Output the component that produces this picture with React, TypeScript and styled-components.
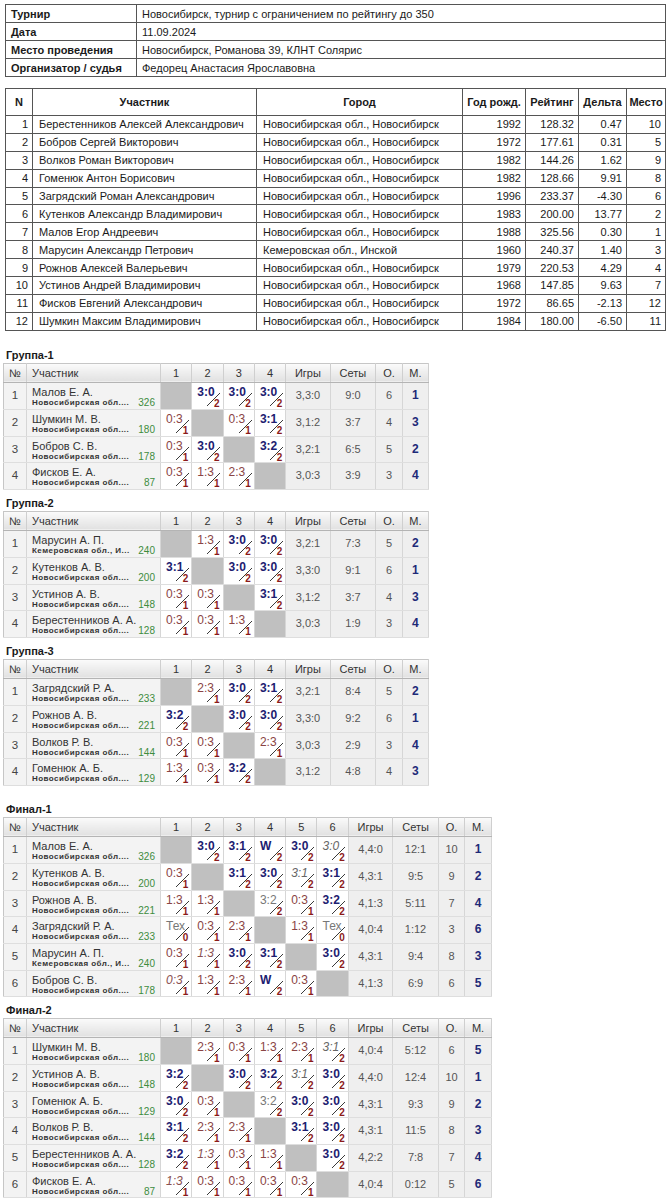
import React from 'react';
import styled, { createGlobalStyle } from 'styled-components';

const SANS = `"Liberation Sans", Arial, sans-serif`;

const GlobalStyle = createGlobalStyle`
  body {
    margin: 0;
    background: #fff;
    font-family: ${SANS};
  }
`;

const Page = styled.div`
  width: 672px;
  box-sizing: border-box;
  padding: 4px 0 0 3px;
`;

/* ---------- top tables ---------- */

const InfoTable = styled.table`
  width: 660px;
  margin: 0 0 11px 2px;
  border-collapse: collapse;
  table-layout: fixed;
  font-size: 11px;
  color: #1a1a1a;
`;

const InfoRow = styled.tr`
  height: 18px;
`;

const InfoCell = styled.td<{ $label?: boolean }>`
  border: 1px solid #555;
  padding: 0 5px;
  font-weight: ${p => (p.$label ? 'bold' : 'normal')};
  white-space: nowrap;
`;

const Col = styled.col<{ $w: number }>`
  width: ${p => p.$w}px;
`;

const MainTable = styled.table`
  width: 660px;
  margin-left: 2px;
  border-collapse: collapse;
  table-layout: fixed;
  font-size: 11px;
  color: #1a1a1a;
`;

const MainHeadRow = styled.tr`
  height: 27px;
`;

const MainHead = styled.th`
  border: 1px solid #555;
  padding: 0;
  font-weight: bold;
  text-align: center;
  white-space: nowrap;
`;

const MainRow = styled.tr`
  height: 17.9px;
`;

const MainCell = styled.td<{ $align?: 'left' | 'right' }>`
  border: 1px solid #555;
  padding: ${p => (p.$align === 'right' ? '0 4px 0 0' : '0 0 0 6px')};
  text-align: ${p => p.$align ?? 'left'};
  white-space: nowrap;
  overflow: hidden;
`;

/* ---------- round robin tables ---------- */

const Heading = styled.div<{ $top: number }>`
  margin: ${p => p.$top}px 0 1px 3px;
  font-size: 11px;
  line-height: 14px;
  font-weight: bold;
  color: #1a1a1a;
`;

const Grid = styled.table`
  border-collapse: collapse;
  table-layout: fixed;
  border: 1px solid #c6c6c6;
`;

const GridHead = styled.th<{ $left?: boolean }>`
  height: 18px;
  padding: ${p => (p.$left ? '0 0 0 5px' : '0')};
  text-align: ${p => (p.$left ? 'left' : 'center')};
  font-weight: normal;
  font-size: 11px;
  color: #333;
  background: linear-gradient(#fbfbfb, #e1e1e1);
  border-right: 1px solid #cfcfcf;
  border-bottom: 1px solid #b4b4b4;
`;

/* rows alternate 27/27/26 px so that they average the 26.7 px of the original */
const GridRow = styled.tr`
  height: 27px;
  &:nth-child(3n) {
    height: 26px;
  }
`;

const NumCell = styled.td`
  padding: 0;
  background: #f3f3f3;
  text-align: center;
  font-size: 11.5px;
  line-height: 13px;
  color: #444;
  border-right: 1px solid #d6d6d6;
  border-bottom: 1px solid #dedede;
`;

const PlayerCell = styled.td`
  padding: 0;
  vertical-align: top;
  background: #f3f3f3;
  border-right: 1px solid #d6d6d6;
  border-bottom: 1px solid #dedede;
`;

const PlayerBox = styled.div`
  height: 24px;
  box-sizing: border-box;
  padding: 3px 5px 0;
  overflow: hidden;
`;

const PlayerName = styled.div`
  font-size: 11px;
  line-height: 13px;
  color: #333;
  white-space: nowrap;
`;

const PlayerMeta = styled.div`
  display: flex;
  justify-content: space-between;
  align-items: flex-end;
  height: 8px;
`;

const Region = styled.span`
  font-size: 8px;
  line-height: 8px;
  font-weight: bold;
  letter-spacing: 0.45px;
  color: #333;
  white-space: nowrap;
`;

const Rating = styled.span`
  font-size: 10px;
  line-height: 8px;
  color: #3d8c3d;
`;

const ScoreCell = styled.td<{ $diag?: boolean }>`
  padding: 0;
  vertical-align: top;
  background: ${p => (p.$diag ? '#c0c0c0' : '#fff')};
  border-right: 1px solid #d6d6d6;
  border-bottom: 1px solid #dedede;
`;

const ScoreBox = styled.div`
  position: relative;
  height: 24px;
  box-sizing: border-box;
  padding: 2px 3px 0 5px;
  display: flex;
  flex-direction: column;
  justify-content: space-between;
`;

type Kind = 'w' | 'l' | 'n' | 'iw' | 'il';

const scoreColor: Record<Kind, string> = {
  w: '#1c2070',
  l: '#8a4444',
  n: '#777',
  iw: '#666',
  il: '#8a5050',
};

const ScoreText = styled.span<{ $kind: Kind }>`
  align-self: flex-start;
  font-size: 12px;
  line-height: 14px;
  font-weight: ${p => (p.$kind === 'w' ? 'bold' : 'normal')};
  font-style: ${p => (p.$kind === 'iw' || p.$kind === 'il' ? 'italic' : 'normal')};
  color: ${p => scoreColor[p.$kind]};
  white-space: nowrap;
`;

const Pts = styled.span`
  align-self: flex-end;
  font-size: 10px;
  line-height: 9px;
  font-weight: bold;
  color: #8b1a1a;
`;

const Slash = styled.svg`
  position: absolute;
  left: 0;
  top: 0;
  width: 31px;
  height: 26px;
  pointer-events: none;
`;

const StatCell = styled.td`
  padding: 0;
  background: #efefef;
  text-align: center;
  font-size: 11px;
  line-height: 13px;
  color: #555;
  border-right: 1px solid #d6d6d6;
  border-bottom: 1px solid #dedede;
`;

const PlaceCell = styled(StatCell)`
  font-size: 12px;
  font-weight: bold;
  color: #1e2a78;
`;

/* ---------- data ---------- */

type Res = [Kind, string, string] | null;

type Player = {
  name: string;
  region: string;
  rating: string;
  res: Res[];
  games: string;
  sets: string;
  pts: string;
  place: string;
};

const NSK = 'Новосибирская обл....';
const KEM = 'Кемеровская обл., И...';
const X: Res = null;
const w = (s: string): Res => ['w', s, '2'];
const l = (s: string): Res => ['l', s, '1'];
const iw = (s: string): Res => ['iw', s, '2'];
const il = (s: string): Res => ['il', s, '1'];
const n = (s: string, p: string): Res => ['n', s, p];

const pl = (
  name: string,
  region: string,
  rating: string,
  res: Res[],
  games: string,
  sets: string,
  pts: string,
  place: string,
): Player => ({ name, region, rating, res, games, sets, pts, place });

const info = [
  ['Турнир', 'Новосибирск, турнир с ограничением по рейтингу до 350'],
  ['Дата', '11.09.2024'],
  ['Место проведения', 'Новосибирск, Романова 39, КЛНТ Солярис'],
  ['Организатор / судья', 'Федорец Анастасия Ярославовна'],
];

const NSK_CITY = 'Новосибирская обл., Новосибирск';

const participants = [
  ['1', 'Берестенников Алексей Александрович', NSK_CITY, '1992', '128.32', '0.47', '10'],
  ['2', 'Бобров Сергей Викторович', NSK_CITY, '1972', '177.61', '0.31', '5'],
  ['3', 'Волков Роман Викторович', NSK_CITY, '1982', '144.26', '1.62', '9'],
  ['4', 'Гоменюк Антон Борисович', NSK_CITY, '1982', '128.66', '9.91', '8'],
  ['5', 'Загрядский Роман Александрович', NSK_CITY, '1996', '233.37', '-4.30', '6'],
  ['6', 'Кутенков Александр Владимирович', NSK_CITY, '1983', '200.00', '13.77', '2'],
  ['7', 'Малов Егор Андреевич', NSK_CITY, '1988', '325.56', '0.30', '1'],
  ['8', 'Марусин Александр Петрович', 'Кемеровская обл., Инской', '1960', '240.37', '1.40', '3'],
  ['9', 'Рожнов Алексей Валерьевич', NSK_CITY, '1979', '220.53', '4.29', '4'],
  ['10', 'Устинов Андрей Владимирович', NSK_CITY, '1968', '147.85', '9.63', '7'],
  ['11', 'Фисков Евгений Александрович', NSK_CITY, '1972', '86.65', '-2.13', '12'],
  ['12', 'Шумкин Максим Владимирович', NSK_CITY, '1984', '180.00', '-6.50', '11'],
];

const mainCols = [27, 224, 206, 63, 53, 48, 39];
const mainHeads = ['N', 'Участник', 'Город', 'Год рожд.', 'Рейтинг', 'Дельта', 'Место'];

type Group = { title: string; top: number; players: Player[] };

const groups: Group[] = [
  {
    title: 'Группа-1',
    top: 17,
    players: [
      pl('Малов Е. А.', NSK, '326', [X, w('3:0'), w('3:0'), w('3:0')], '3,3:0', '9:0', '6', '1'),
      pl('Шумкин М. В.', NSK, '180', [l('0:3'), X, l('0:3'), w('3:1')], '3,1:2', '3:7', '4', '3'),
      pl('Бобров С. В.', NSK, '178', [l('0:3'), w('3:0'), X, w('3:2')], '3,2:1', '6:5', '5', '2'),
      pl('Фисков Е. А.', NSK, '87', [l('0:3'), l('1:3'), l('2:3'), X], '3,0:3', '3:9', '3', '4'),
    ],
  },
  {
    title: 'Группа-2',
    top: 6,
    players: [
      pl('Марусин А. П.', KEM, '240', [X, l('1:3'), w('3:0'), w('3:0')], '3,2:1', '7:3', '5', '2'),
      pl('Кутенков А. В.', NSK, '200', [w('3:1'), X, w('3:0'), w('3:0')], '3,3:0', '9:1', '6', '1'),
      pl('Устинов А. В.', NSK, '148', [l('0:3'), l('0:3'), X, w('3:1')], '3,1:2', '3:7', '4', '3'),
      pl('Берестенников А. А.', NSK, '128', [l('0:3'), l('0:3'), l('1:3'), X], '3,0:3', '1:9', '3', '4'),
    ],
  },
  {
    title: 'Группа-3',
    top: 6,
    players: [
      pl('Загрядский Р. А.', NSK, '233', [X, l('2:3'), w('3:0'), w('3:1')], '3,2:1', '8:4', '5', '2'),
      pl('Рожнов А. В.', NSK, '221', [w('3:2'), X, w('3:0'), w('3:0')], '3,3:0', '9:2', '6', '1'),
      pl('Волков Р. В.', NSK, '144', [l('0:3'), l('0:3'), X, l('2:3')], '3,0:3', '2:9', '3', '4'),
      pl('Гоменюк А. Б.', NSK, '129', [l('1:3'), l('0:3'), w('3:2'), X], '3,1:2', '4:8', '4', '3'),
    ],
  },
  {
    title: 'Финал-1',
    top: 16,
    players: [
      pl('Малов Е. А.', NSK, '326', [X, w('3:0'), w('3:1'), w('W'), w('3:0'), iw('3:0')], '4,4:0', '12:1', '10', '1'),
      pl('Кутенков А. В.', NSK, '200', [l('0:3'), X, w('3:1'), w('3:0'), iw('3:1'), w('3:1')], '4,3:1', '9:5', '9', '2'),
      pl('Рожнов А. В.', NSK, '221', [l('1:3'), l('1:3'), X, n('3:2', '2'), l('0:3'), w('3:2')], '4,1:3', '5:11', '7', '4'),
      pl('Загрядский Р. А.', NSK, '233', [n('Тех', '0'), l('0:3'), l('2:3'), X, l('1:3'), n('Тех', '0')], '4,0:4', '1:12', '3', '6'),
      pl('Марусин А. П.', KEM, '240', [l('0:3'), il('1:3'), w('3:0'), w('3:1'), X, w('3:0')], '4,3:1', '9:4', '8', '3'),
      pl('Бобров С. В.', NSK, '178', [il('0:3'), l('1:3'), l('2:3'), w('W'), l('0:3'), X], '4,1:3', '6:9', '6', '5'),
    ],
  },
  {
    title: 'Финал-2',
    top: 6,
    players: [
      pl('Шумкин М. В.', NSK, '180', [X, l('2:3'), l('0:3'), l('1:3'), l('2:3'), iw('3:1')], '4,0:4', '5:12', '6', '5'),
      pl('Устинов А. В.', NSK, '148', [w('3:2'), X, w('3:0'), w('3:2'), iw('3:1'), w('3:0')], '4,4:0', '12:4', '10', '1'),
      pl('Гоменюк А. Б.', NSK, '129', [w('3:0'), l('0:3'), X, n('3:2', '2'), w('3:0'), w('3:0')], '4,3:1', '9:3', '9', '2'),
      pl('Волков Р. В.', NSK, '144', [w('3:1'), l('2:3'), l('2:3'), X, w('3:1'), w('3:0')], '4,3:1', '11:5', '8', '3'),
      pl('Берестенников А. А.', NSK, '128', [w('3:2'), il('1:3'), l('0:3'), l('1:3'), X, w('3:0')], '4,2:2', '7:8', '7', '4'),
      pl('Фисков Е. А.', NSK, '87', [il('1:3'), l('0:3'), l('0:3'), l('0:3'), l('0:3'), X], '4,0:4', '0:12', '5', '6'),
    ],
  },
];

/* ---------- components ---------- */

const Score = ({ r }: { r: Res }) => {
  if (!r) return <ScoreCell $diag />;
  const [kind, text, pts] = r;
  return (
    <ScoreCell>
      <ScoreBox>
        <Slash viewBox="0 0 31 26">
          <line x1="15" y1="23" x2="28" y2="10" stroke="#3a3a3a" strokeWidth="1" />
        </Slash>
        <ScoreText $kind={kind}>{text}</ScoreText>
        <Pts>{pts}</Pts>
      </ScoreBox>
    </ScoreCell>
  );
};

const RoundTable = ({ group }: { group: Group }) => {
  const size = group.players.length;
  const cols = [23, 134, ...Array(size).fill(31.3), 44.5, 45.5, 26.5, 26.5];
  return (
    <>
      <Heading $top={group.top}>{group.title}</Heading>
      <Grid>
        <colgroup>
          {cols.map((c, i) => (
            <Col key={i} $w={c} />
          ))}
        </colgroup>
        <thead>
          <tr>
            <GridHead>№</GridHead>
            <GridHead $left>Участник</GridHead>
            {group.players.map((_, i) => (
              <GridHead key={i}>{i + 1}</GridHead>
            ))}
            <GridHead>Игры</GridHead>
            <GridHead>Сеты</GridHead>
            <GridHead>О.</GridHead>
            <GridHead>М.</GridHead>
          </tr>
        </thead>
        <tbody>
          {group.players.map((p, i) => (
            <GridRow key={i}>
              <NumCell>{i + 1}</NumCell>
              <PlayerCell>
                <PlayerBox>
                  <PlayerName>{p.name}</PlayerName>
                  <PlayerMeta>
                    <Region>{p.region}</Region>
                    <Rating>{p.rating}</Rating>
                  </PlayerMeta>
                </PlayerBox>
              </PlayerCell>
              {p.res.map((r, j) => (
                <Score key={j} r={r} />
              ))}
              <StatCell>{p.games}</StatCell>
              <StatCell>{p.sets}</StatCell>
              <StatCell>{p.pts}</StatCell>
              <PlaceCell>{p.place}</PlaceCell>
            </GridRow>
          ))}
        </tbody>
      </Grid>
    </>
  );
};

export default function App() {
  return (
    <Page>
      <GlobalStyle />
      <InfoTable>
        <colgroup>
          <Col $w={131} />
          <Col $w={529} />
        </colgroup>
        <tbody>
          {info.map(([k, v]) => (
            <InfoRow key={k}>
              <InfoCell $label>{k}</InfoCell>
              <InfoCell>{v}</InfoCell>
            </InfoRow>
          ))}
        </tbody>
      </InfoTable>

      <MainTable>
        <colgroup>
          {mainCols.map((c, i) => (
            <Col key={i} $w={c} />
          ))}
        </colgroup>
        <thead>
          <MainHeadRow>
            {mainHeads.map(h => (
              <MainHead key={h}>{h}</MainHead>
            ))}
          </MainHeadRow>
        </thead>
        <tbody>
          {participants.map(r => (
            <MainRow key={r[0]}>
              <MainCell $align="right">{r[0]}</MainCell>
              <MainCell>{r[1]}</MainCell>
              <MainCell>{r[2]}</MainCell>
              <MainCell $align="right">{r[3]}</MainCell>
              <MainCell $align="right">{r[4]}</MainCell>
              <MainCell $align="right">{r[5]}</MainCell>
              <MainCell $align="right">{r[6]}</MainCell>
            </MainRow>
          ))}
        </tbody>
      </MainTable>

      {groups.map(g => (
        <RoundTable key={g.title} group={g} />
      ))}
    </Page>
  );
}
